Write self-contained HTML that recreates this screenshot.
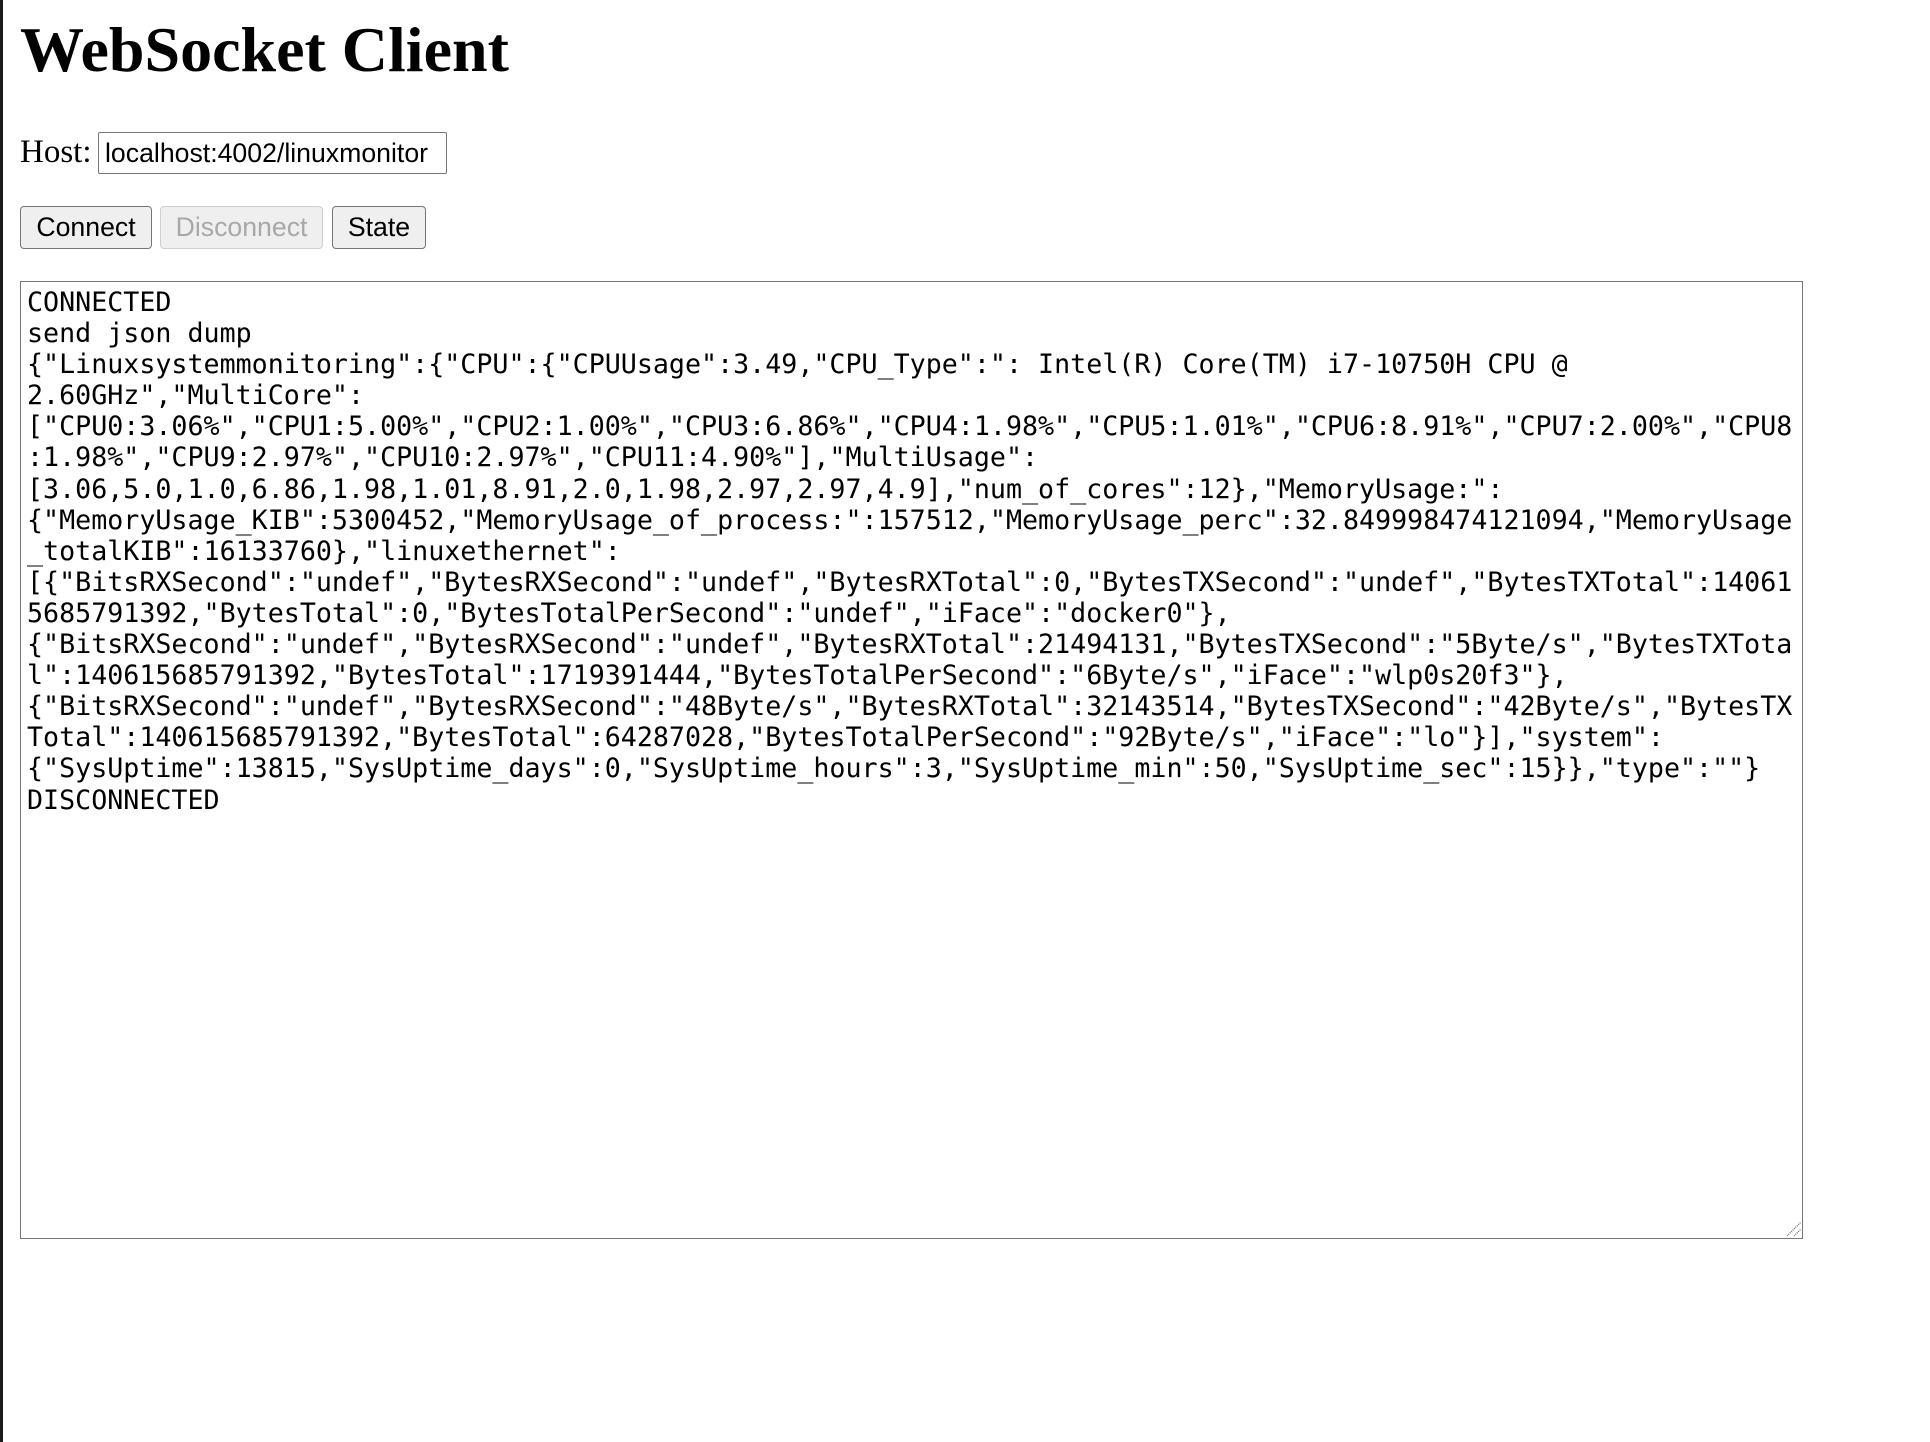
<!DOCTYPE html>
<html><head><meta charset="utf-8">
<style>
html,body{margin:0;padding:0;background:#fff;width:1930px;height:1442px;overflow:hidden;position:relative}
.bar{position:absolute;left:0;top:0;width:3px;height:1442px;background:#1c1c1c}
.t{position:absolute;left:20px;top:18px;font:bold 64px/64px "Liberation Serif",serif;color:#000;white-space:nowrap}
.host{position:absolute;left:20px;top:136px;font:33px/32px "Liberation Serif",serif;color:#000}
.inp{position:absolute;left:98px;top:132px;width:349px;height:42px;border:1.5px solid #767676;display:flex;align-items:center;font:26.67px "Liberation Sans",sans-serif;color:#000;padding-left:6px;box-sizing:border-box;border-radius:2px}
.btn{position:absolute;top:206px;height:43px;box-sizing:border-box;border:1.5px solid #767676;border-radius:4px;background:#efefef;display:flex;align-items:center;justify-content:center;font:26.67px "Liberation Sans",sans-serif;color:#000}
.dis{color:#a8a8a8;border-color:#cfcfcf;background:#efefef}
.ta{position:absolute;left:20px;top:281px;width:1783px;height:958px;box-sizing:border-box;border:1.5px solid #767676;}
.txt{position:absolute;left:27px;top:287px;font:26.67px/31.1px "DejaVu Sans Mono",monospace;white-space:pre;color:#000}
.grip{position:absolute;left:1786px;top:1221px}
</style></head><body>
<div class="bar"></div>
<div class="t">WebSocket Client</div>
<div class="host">Host:</div>
<div class="inp">localhost:4002/linuxmonitor</div>
<div class="btn" style="left:20px;width:132px">Connect</div>
<div class="btn dis" style="left:160px;width:163px">Disconnect</div>
<div class="btn" style="left:332px;width:94px">State</div>
<div class="ta"></div>
<div class="txt">CONNECTED
send json dump
{"Linuxsystemmonitoring":{"CPU":{"CPUUsage":3.49,"CPU_Type":": Intel(R) Core(TM) i7-10750H CPU @
2.60GHz","MultiCore":
["CPU0:3.06%","CPU1:5.00%","CPU2:1.00%","CPU3:6.86%","CPU4:1.98%","CPU5:1.01%","CPU6:8.91%","CPU7:2.00%","CPU8
:1.98%","CPU9:2.97%","CPU10:2.97%","CPU11:4.90%"],"MultiUsage":
[3.06,5.0,1.0,6.86,1.98,1.01,8.91,2.0,1.98,2.97,2.97,4.9],"num_of_cores":12},"MemoryUsage:":
{"MemoryUsage_KIB":5300452,"MemoryUsage_of_process:":157512,"MemoryUsage_perc":32.849998474121094,"MemoryUsage
_totalKIB":16133760},"linuxethernet":
[{"BitsRXSecond":"undef","BytesRXSecond":"undef","BytesRXTotal":0,"BytesTXSecond":"undef","BytesTXTotal":14061
5685791392,"BytesTotal":0,"BytesTotalPerSecond":"undef","iFace":"docker0"},
{"BitsRXSecond":"undef","BytesRXSecond":"undef","BytesRXTotal":21494131,"BytesTXSecond":"5Byte/s","BytesTXTota
l":140615685791392,"BytesTotal":1719391444,"BytesTotalPerSecond":"6Byte/s","iFace":"wlp0s20f3"},
{"BitsRXSecond":"undef","BytesRXSecond":"48Byte/s","BytesRXTotal":32143514,"BytesTXSecond":"42Byte/s","BytesTX
Total":140615685791392,"BytesTotal":64287028,"BytesTotalPerSecond":"92Byte/s","iFace":"lo"}],"system":
{"SysUptime":13815,"SysUptime_days":0,"SysUptime_hours":3,"SysUptime_min":50,"SysUptime_sec":15}},"type":""}
DISCONNECTED</div>
<svg class="grip" width="16" height="16" viewBox="0 0 16 16"><path d="M1 15L15 1M8 15L15 8" stroke="#666" stroke-width="1.2" stroke-dasharray="1 1"/></svg>
</body></html>
